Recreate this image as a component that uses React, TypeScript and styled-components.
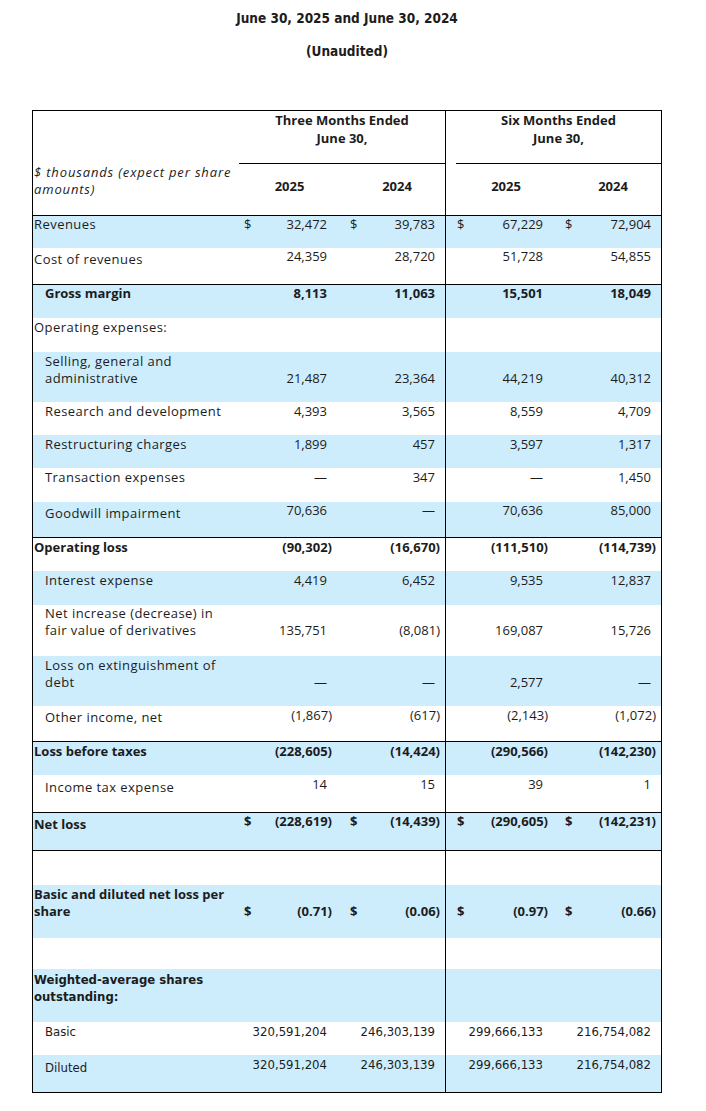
import React from 'react';
import styled, { createGlobalStyle } from 'styled-components';

const GlobalStyle = createGlobalStyle`
  body {
    margin: 0;
    background: #ffffff;
    color: #1c1c1c;
    font-family: 'Open Sans', 'Noto Sans', sans-serif;
    font-size: 13px;
  }
`;

const NARROW = `'Liberation Sans Narrow', 'DejaVu Sans Condensed', 'Roboto', sans-serif`;
const BLUE = '#cdecfc';
const GRID = '206px 101px 106px 107px 108px';

// per column spacing of the $ sign and the right edge of the figure
const cols = [
  { pl: 5, pr: 13 },
  { pl: 10, pr: 10, divider: true },
  { pl: 11, pr: 10 },
  { pl: 12, pr: 10 },
];

const Page = styled.main`
  width: 630px;
  margin-left: 32px;
  padding-top: 10px;
`;

const Title = styled.h1`
  margin: 0;
  text-align: center;
  font-family: ${NARROW};
  font-stretch: condensed;
  font-weight: 700;
  font-size: 13.5px;
  line-height: 17px;
`;

const Subtitle = styled(Title)`
  margin-top: 16px;
`;

const Table = styled.section`
  margin-top: 50px;
  border: 1px solid #000;
`;

const Header = styled.div`
  display: grid;
  grid-template-columns: ${GRID};
  grid-template-rows: 53px 51px;
  border-bottom: 1px solid #000;
`;

const UnitLabel = styled.div`
  grid-row: 1 / 3;
  grid-column: 1;
  align-self: end;
  padding: 0 2px 17px 1px;
  font-style: italic;
  letter-spacing: 0.85px;
  line-height: 17px;
`;

const Group = styled.div<{ $col: number; $divider?: boolean; $inset?: number }>`
  grid-row: 1;
  grid-column: ${(p) => p.$col} / span 2;
  margin-left: ${(p) => p.$inset || 0}px;
  border-bottom: 1px solid #000;
  border-right: ${(p) => (p.$divider ? '1px solid #000' : 'none')};
  text-align: center;
  font-weight: 700;
  line-height: 18px;
`;

const Year = styled.div<{ $col: number; $shift: number; $divider?: boolean }>`
  grid-row: 2;
  grid-column: ${(p) => p.$col};
  display: flex;
  align-items: flex-end;
  justify-content: center;
  padding: 0 0 20px ${(p) => p.$shift}px;
  border-right: ${(p) => (p.$divider ? '1px solid #000' : 'none')};
  font-weight: 700;
  line-height: 17px;
`;

const Row = styled.div<{ $blue?: boolean; $rule?: boolean; $close?: boolean }>`
  display: grid;
  grid-template-columns: ${GRID};
  background: ${(p) => (p.$blue ? BLUE : '#ffffff')};
  border-top: ${(p) => (p.$rule ? '1px solid #000' : 'none')};
  border-bottom: ${(p) => (p.$close ? '1px solid #000' : 'none')};
  line-height: 17px;
`;

const Label = styled.div<{ $indent?: boolean; $bold?: boolean; $narrow?: boolean; $top: number; $pad: number }>`
  min-height: 17px;
  padding: ${(p) => p.$top}px 4px ${(p) => p.$pad}px ${(p) => (p.$indent ? 12 : 1)}px;
  font-weight: ${(p) => (p.$bold ? 700 : 400)};
  letter-spacing: ${(p) => (p.$bold || p.$narrow ? 0 : 0.45)}px;
  font-family: ${(p) => (p.$narrow ? NARROW : 'inherit')};
  font-stretch: ${(p) => (p.$narrow ? 'condensed' : 'normal')};
  font-size: 13px;
  line-height: 17px;
`;

const Cell = styled.div<{ $pl: number; $pr: number; $pad: number; $divider?: boolean; $bold?: boolean; $narrow?: boolean }>`
  display: flex;
  justify-content: space-between;
  align-items: flex-end;
  padding: 0 ${(p) => p.$pr}px ${(p) => p.$pad}px ${(p) => p.$pl}px;
  border-right: ${(p) => (p.$divider ? '1px solid #000' : 'none')};
  font-weight: ${(p) => (p.$bold ? 700 : 400)};
  font-family: ${(p) => (p.$narrow ? NARROW : 'inherit')};
  font-stretch: ${(p) => (p.$narrow ? 'condensed' : 'normal')};
  font-size: 13px;
`;

const Sign = styled.span``;

const Amount = styled.span<{ $hang?: boolean }>`
  margin-left: auto;
  margin-right: ${(p) => (p.$hang ? -5 : 0)}px;
`;

type Line = {
  label?: string;
  values?: string[];
  dollar?: boolean;
  indent?: boolean;
  bold?: boolean;
  narrow?: boolean;
  rule?: boolean;
  close?: boolean;
  top?: number; // space above the label
  pad?: number; // space below the label
  lift?: number; // figures sit this much higher than the label's last line
};

const lines: Line[] = [
  { label: 'Revenues', values: ['32,472', '39,783', '67,229', '72,904'], dollar: true, pad: 15 },
  { label: 'Cost of revenues', values: ['24,359', '28,720', '51,728', '54,855'], top: 3, pad: 16, lift: 3 },
  { label: 'Gross margin', values: ['8,113', '11,063', '15,501', '18,049'], indent: true, bold: true, rule: true, pad: 16 },
  { label: 'Operating expenses:', top: 1, pad: 16 },
  { label: 'Selling, general and administrative', values: ['21,487', '23,364', '44,219', '40,312'], indent: true, top: 1, pad: 15 },
  { label: 'Research and development', values: ['4,393', '3,565', '8,559', '4,709'], indent: true, top: 1, pad: 15 },
  { label: 'Restructuring charges', values: ['1,899', '457', '3,597', '1,317'], indent: true, top: 1, pad: 15 },
  { label: 'Transaction expenses', values: ['—', '347', '—', '1,450'], indent: true, top: 1, pad: 16 },
  { label: 'Goodwill impairment', values: ['70,636', '—', '70,636', '85,000'], indent: true, top: 3, pad: 15, lift: 3 },
  { label: 'Operating loss', values: ['(90,302)', '(16,670)', '(111,510)', '(114,739)'], bold: true, rule: true, top: 1, pad: 15 },
  { label: 'Interest expense', values: ['4,419', '6,452', '9,535', '12,837'], indent: true, top: 1, pad: 16 },
  { label: 'Net increase (decrease) in fair value of derivatives', values: ['135,751', '(8,081)', '169,087', '15,726'], indent: true, pad: 17 },
  { label: 'Loss on extinguishment of debt', values: ['—', '—', '2,577', '—'], indent: true, top: 1, pad: 15 },
  { label: 'Other income, net', values: ['(1,867)', '(617)', '(2,143)', '(1,072)'], indent: true, top: 3, pad: 15, lift: 2 },
  { label: 'Loss before taxes', values: ['(228,605)', '(14,424)', '(290,566)', '(142,230)'], bold: true, rule: true, top: 1, pad: 15 },
  { label: 'Income tax expense', values: ['14', '15', '39', '1'], indent: true, top: 4, pad: 16, lift: 3 },
  { label: 'Net loss', values: ['(228,619)', '(14,439)', '(290,605)', '(142,231)'], dollar: true, bold: true, rule: true, close: true, top: 3, pad: 17, lift: 3 },
  {},
  { label: 'Basic and diluted net loss per share', values: ['(0.71)', '(0.06)', '(0.97)', '(0.66)'], dollar: true, bold: true, top: 1, pad: 18 },
  { pad: 14 },
  { label: 'Weighted-average shares outstanding:', bold: true, narrow: true, top: 2, pad: 17 },
  { label: 'Basic', values: ['320,591,204', '246,303,139', '299,666,133', '216,754,082'], indent: true, narrow: true, top: 1, pad: 15 },
  { label: 'Diluted', values: ['320,591,204', '246,303,139', '299,666,133', '216,754,082'], indent: true, narrow: true, top: 4, pad: 16, lift: 3 },
];

export default function App() {
  return (
    <>
      <GlobalStyle />
      <Page>
        <Title>June 30, 2025 and June 30, 2024</Title>
        <Subtitle>(Unaudited)</Subtitle>
        <Table>
          <Header>
            <UnitLabel>$ thousands (expect per share amounts)</UnitLabel>
            <Group $col={2} $divider>
              Three Months Ended
              <br />
              June 30,
            </Group>
            <Group $col={4} $inset={10}>
              Six Months Ended
              <br />
              June 30,
            </Group>
            <Year $col={2} $shift={0}>2025</Year>
            <Year $col={3} $shift={9} $divider>2024</Year>
            <Year $col={4} $shift={13}>2025</Year>
            <Year $col={5} $shift={12}>2024</Year>
          </Header>
          {lines.map((line, i) => {
            const top = line.top ?? 0;
            const pad = line.pad ?? 17;
            return (
              <Row key={i} $blue={i % 2 === 0} $rule={line.rule} $close={line.close}>
                <Label $indent={line.indent} $bold={line.bold} $narrow={line.narrow} $top={top} $pad={pad}>
                  {line.label}
                </Label>
                {cols.map((c, j) => {
                  const v = line.values ? line.values[j] : '';
                  return (
                    <Cell
                      key={j}
                      $pl={c.pl}
                      $pr={c.pr}
                      $pad={pad + (line.lift ?? 0)}
                      $divider={c.divider}
                      $bold={line.bold}
                      $narrow={line.narrow}
                    >
                      {line.dollar && <Sign>$</Sign>}
                      <Amount $hang={v.endsWith(')')}>{v}</Amount>
                    </Cell>
                  );
                })}
              </Row>
            );
          })}
        </Table>
      </Page>
    </>
  );
}
